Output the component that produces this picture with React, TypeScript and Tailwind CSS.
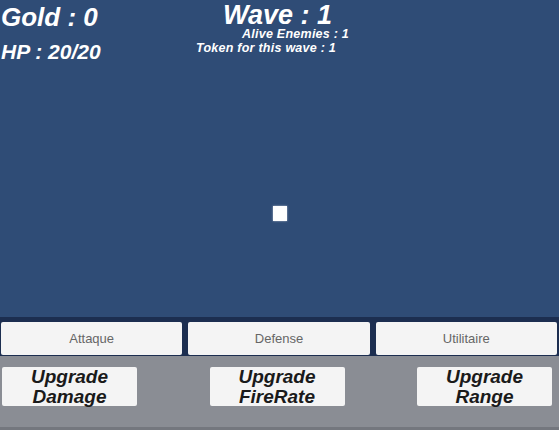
const font = { fontFamily: '"Liberation Sans", Arial, sans-serif' };

const tabs = ["Attaque", "Defense", "Utilitaire"];
const upgrades = [
  ["Upgrade", "Damage"],
  ["Upgrade", "FireRate"],
  ["Upgrade", "Range"],
];

export default function App() {
  return (
    <div className="w-[559px] h-[430px] flex flex-col overflow-hidden bg-[#2f4c76]" style={font}>
      {/* playfield + HUD */}
      <div className="relative h-[317px] flex items-start text-white font-bold italic">
        <div className="w-[196px] flex flex-col pt-[4px] pl-[1px]">
          <span className="text-[26px] leading-none">Gold : 0</span>
          <span className="mt-[11px] text-[21px] leading-none">HP : 20/20</span>
        </div>
        <div className="flex flex-col items-start pt-[3px]">
          <span className="ml-[27px] text-[27px] leading-[24px]">Wave : 1</span>
          <span className="ml-[46px] text-[12.5px] leading-[14px] tracking-[0.25px]">Alive Enemies : 1</span>
          <span className="text-[12.5px] leading-[14px] tracking-[0.25px]">Token for this wave : 1</span>
        </div>
        {/* enemy */}
        <div className="absolute left-[273px] top-[206px] w-[14px] h-[15px] bg-white shadow-[0_0_2px_rgba(255,255,255,0.6)]" />
      </div>

      {/* tab bar */}
      <div className="bg-[#1c2e50] pt-[5px] pb-[1px] pl-[1px] pr-[2px] flex gap-[6px]">
        {tabs.map((t) => (
          <div
            key={t}
            className="flex-1 h-[33px] rounded-[2px] bg-[#f4f4f4] flex items-center justify-center text-[13px] text-[#666]"
          >
            {t}
          </div>
        ))}
      </div>

      {/* upgrade panel */}
      <div className="flex-1 flex flex-col bg-[#8a8d94]">
        <div className="flex-1 flex justify-between items-start pt-[11px] pl-[2px] pr-[7px]">
          {upgrades.map(([a, b]) => (
            <div
              key={b}
              className="w-[135px] h-[39px] rounded-[2px] bg-[#f4f4f4] flex flex-col items-center justify-center text-[19px] leading-[20px] font-bold italic text-[#1a1a1a]"
            >
              <span>{a}</span>
              <span>{b}</span>
            </div>
          ))}
        </div>
        <div className="h-[3px] bg-[#74777e]" />
      </div>
    </div>
  );
}
